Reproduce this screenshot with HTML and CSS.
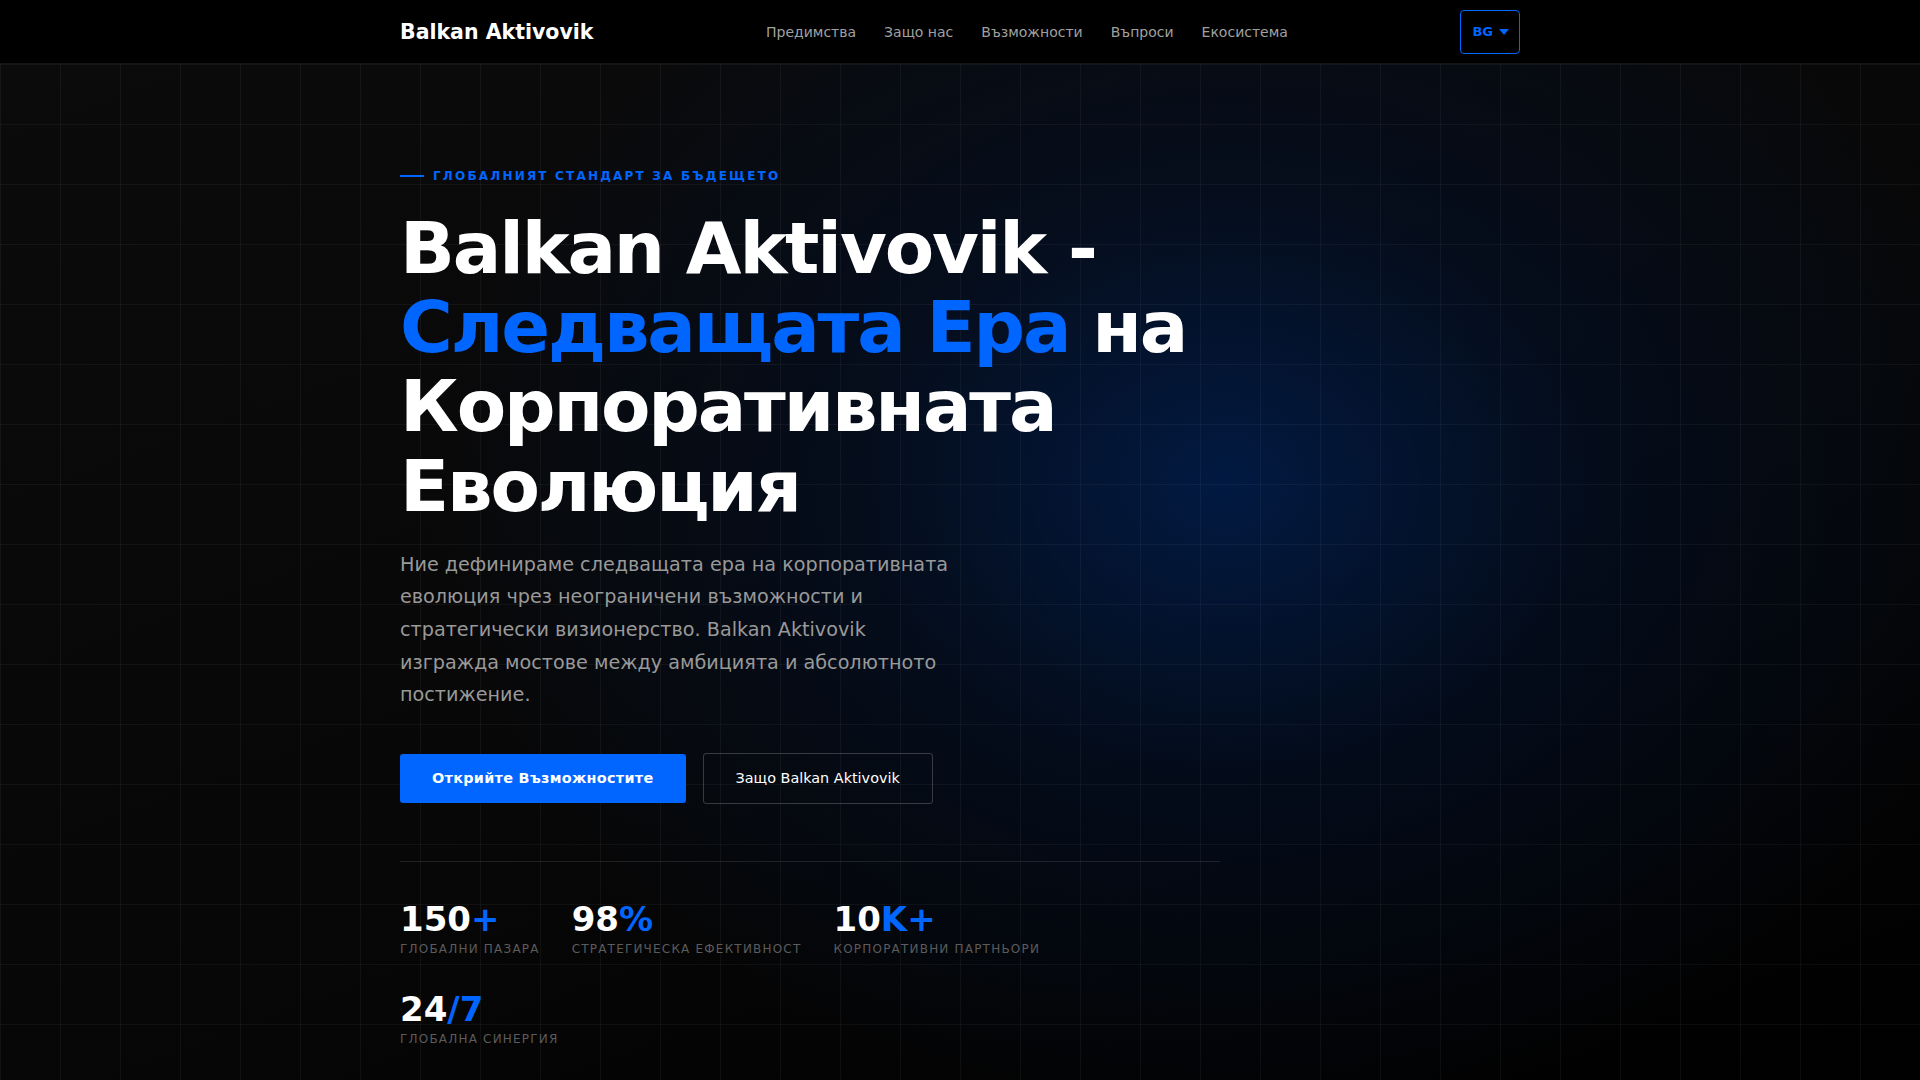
FILE: index.html
```html
<!DOCTYPE html>
<html lang="bg">
<head>
    <meta charset="UTF-8">
    <meta name="viewport" content="width=device-width, initial-scale=1.0">
    <title>Balkan Aktivovik</title>
    <link rel="stylesheet" href="styles.css">
</head>
<body>

    <!-- Горна навигация -->
    <header class="site-header">
        <div class="container header-inner">
            <a href="#" class="logo">Balkan Aktivovik</a>
            <nav class="main-nav">
                <a href="#predimstva">Предимства</a>
                <a href="#zashto">Защо нас</a>
                <a href="#vazmojnosti">Възможности</a>
                <a href="#vaprosi">Въпроси</a>
                <a href="#ekosistema">Екосистема</a>
            </nav>
            <button class="lang-btn">BG <span class="lang-caret"></span></button>
        </div>
    </header>

    <!-- Основна секция -->
    <main class="hero">
        <div class="container">
            <div class="hero-content">
                <p class="eyebrow"><span class="eyebrow-line"></span>Глобалният стандарт за бъдещето</p>

                <h1 class="hero-title">Balkan Aktivovik - <span class="accent">Следващата Ера</span> на Корпоративната Еволюция</h1>

                <p class="hero-text">Ние дефинираме следващата ера на корпоративната еволюция чрез неограничени възможности и стратегически визионерство. Balkan Aktivovik изгражда мостове между амбицията и абсолютното постижение.</p>

                <div class="hero-actions">
                    <a href="#vazmojnosti" class="btn btn-primary">Открийте Възможностите</a>
                    <a href="#zashto" class="btn btn-outline">Защо Balkan Aktivovik</a>
                </div>

                <!-- Статистики -->
                <div class="stats">
                    <div class="stat">
                        <div class="stat-number">150<span class="accent">+</span></div>
                        <div class="stat-label">Глобални пазара</div>
                    </div>
                    <div class="stat">
                        <div class="stat-number">98<span class="accent">%</span></div>
                        <div class="stat-label">Стратегическа ефективност</div>
                    </div>
                    <div class="stat">
                        <div class="stat-number">10<span class="accent">K+</span></div>
                        <div class="stat-label">Корпоративни партньори</div>
                    </div>
                    <div class="stat">
                        <div class="stat-number">24<span class="accent">/7</span></div>
                        <div class="stat-label">Глобална синергия</div>
                    </div>
                </div>
            </div>
        </div>
    </main>

</body>
</html>
```

FILE: styles.css
```css
* {
    box-sizing: border-box;
}

body {
    font-family: "DejaVu Sans", Verdana, sans-serif;
    background-color: #0a0a0a;
    color: #ffffff;
    margin: 0;
    padding: 0;
}

a {
    text-decoration: none;
    color: inherit;
}

.container {
    width: 1120px;
    margin: 0 auto;
}

.accent {
    color: #0066ff;
}

/* Навигация */
.site-header {
    background-color: #000000;
    border-bottom: 1px solid rgba(255, 255, 255, 0.08);
}

.header-inner {
    display: flex;
    justify-content: space-between;
    align-items: center;
    height: 63px;
}

.logo {
    font-size: 20.5px;
    font-weight: bold;
    color: #ffffff;
}

.main-nav {
    display: flex;
    gap: 28px;
}

.main-nav a {
    font-size: 14px;
    color: #a0a0a0;
    transition: color 0.3s;
}

.main-nav a:hover {
    color: #ffffff;
}

.lang-btn {
    display: flex;
    align-items: center;
    gap: 6px;
    height: 44px;
    padding: 0 10px 0 11px;
    background: transparent;
    border: 1px solid #0066ff;
    border-radius: 4px;
    color: #0066ff;
    font-family: inherit;
    font-size: 13px;
    font-weight: bold;
    cursor: pointer;
}

.lang-caret {
    width: 0;
    height: 0;
    border-left: 5.5px solid transparent;
    border-right: 5.5px solid transparent;
    border-top: 6px solid #0066ff;
}

/* Hero */
.hero {
    min-height: calc(100vh - 64px);
    padding: 103px 0 60px;
    background-color: #0a0a0a;
    background-image:
        linear-gradient(rgba(255, 255, 255, 0.045) 1px, transparent 1px),
        linear-gradient(90deg, rgba(255, 255, 255, 0.045) 1px, transparent 1px),
        radial-gradient(ellipse 800px 640px at 1225px 420px, rgba(0, 30, 80, 0.8) 0%, rgba(0, 20, 55, 0.42) 45%, transparent 100%),
        linear-gradient(160deg, #0b0b0b 0%, #070707 55%, #000000 100%);
    background-size: 60px 60px, 60px 60px, 100% 100%, 100% 100%;
}

.hero-content {
    max-width: 820px;
}

.eyebrow {
    display: flex;
    align-items: center;
    gap: 9px;
    margin: 0 0 24px;
    font-size: 12px;
    line-height: 18px;
    font-weight: bold;
    letter-spacing: 2.2px;
    text-transform: uppercase;
    color: #0066ff;
}

.eyebrow-line {
    width: 24px;
    height: 2px;
    background-color: #0066ff;
}

.hero-title {
    margin: 0 0 23px;
    font-size: 72px;
    line-height: 1.1;
    font-weight: bold;
    letter-spacing: -0.03em;
    color: #ffffff;
}

.hero-text {
    max-width: 560px;
    margin: 0 0 41px;
    font-size: 19.2px;
    line-height: 1.7;
    color: #999999;
}

.hero-actions {
    display: flex;
    align-items: center;
    gap: 17px;
}

.btn {
    font-size: 14.4px;
    line-height: 17px;
    padding: 16px 32px;
    border-radius: 3px;
    transition: background-color 0.3s;
}

.btn-primary {
    background-color: #0066ff;
    color: #ffffff;
    font-weight: bold;
    letter-spacing: 0.3px;
}

.btn-primary:hover {
    background-color: #0052cc;
}

.btn-outline {
    border: 1px solid rgba(255, 255, 255, 0.2);
    color: #ffffff;
}

/* Статистики */
.stats {
    display: flex;
    flex-wrap: wrap;
    column-gap: 32px;
    row-gap: 34px;
    margin-top: 57px;
    padding-top: 40px;
    border-top: 1px solid rgba(255, 255, 255, 0.1);
}

.stat-number {
    font-size: 34px;
    line-height: 1;
    font-weight: bold;
    color: #ffffff;
}

.stat-label {
    margin-top: 4px;
    font-size: 12px;
    line-height: 18px;
    letter-spacing: 0.1em;
    text-transform: uppercase;
    color: #5c5c5c;
}
```
